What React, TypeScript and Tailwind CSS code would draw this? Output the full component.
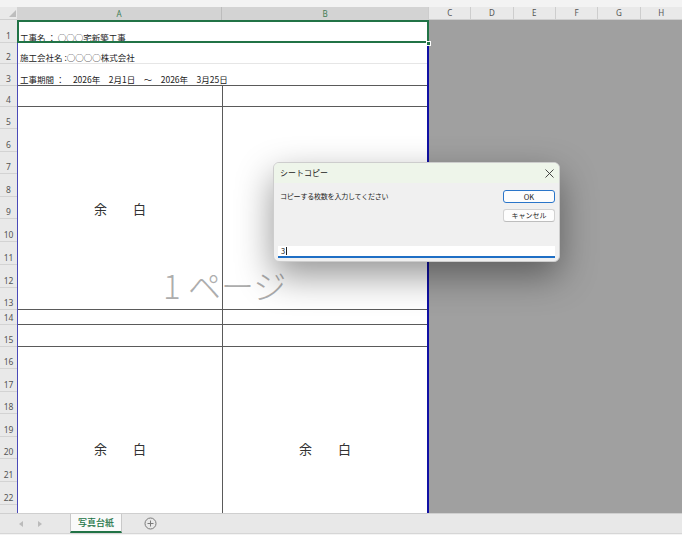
import React from 'react';

const jp = "font-['Noto_Sans_CJK_JP','Noto_Sans',sans-serif]";

const rowHeights = [23, 21, 22, 21, 22, 23, 22, 23, 22, 23, 23, 23, 22, 15, 22, 22, 23, 22, 23, 22, 23, 23];
const hClass: Record<number, string> = {
  15: 'h-[15px]',
  21: 'h-[21px]',
  22: 'h-[22px]',
  23: 'h-[23px]',
};

const otherCols = ['C', 'D', 'E', 'F', 'G', 'H'];

const Yohaku = () => (
  <span className={`${jp} text-[13px] leading-[13px] text-[#333]`}>余　　白</span>
);

const ColumnHeaders = () => (
  <div className="flex h-[13px] shrink-0 text-[8px] leading-none font-['Noto_Sans',sans-serif]">
    <div className="relative w-[17px] bg-[#e9e9e9] border-b border-[#cfcfcf]">
      <svg className="absolute right-[1px] bottom-[2px]" width="7" height="7" viewBox="0 0 7 7">
        <path d="M7 0 L7 7 L0 7 Z" fill="#bdbdbd" />
      </svg>
    </div>
    <div className="w-[205px] flex items-center justify-center bg-[#d3d3d3] text-[#3f7d53] border-r border-[#bcbcbc]">
      A
    </div>
    <div className="w-[206px] flex items-center justify-center bg-[#d3d3d3] text-[#3f7d53]">B</div>
    {otherCols.map((c) => (
      <div
        key={c}
        className="flex-1 flex items-center justify-center bg-[#e9e9e9] text-[#555] border-l border-[#cdcdcd] border-b border-b-[#cfcfcf]"
      >
        {c}
      </div>
    ))}
  </div>
);

const RowHeaders = () => (
  <div className="w-[17px] shrink-0 flex flex-col bg-[#e9e9e9] text-[8.5px] text-[#555] font-['Noto_Sans',sans-serif]">
    {rowHeights.map((h, i) => (
      <div
        key={i}
        className={`${hClass[h]} shrink-0 flex items-end justify-center leading-none pb-[2px] border-b border-[#d3d3d3]`}
      >
        {i + 1}
      </div>
    ))}
    <div className="flex-1" />
  </div>
);

const Sheet = () => (
  <div className={`${jp} relative w-[412px] shrink-0 flex flex-col bg-white border-l border-l-[#4a4ab8] border-r-2 border-r-[#1010a4]`}>
    {/* row 1 */}
    <div className="relative h-[23px] shrink-0 flex items-end pl-[2px] pb-[1px] text-[8.5px] leading-[10px] text-[#222]">
      工事名 ： ○○○宅新築工事
      <div className="absolute -left-px -right-[2px] top-0 bottom-0 border-2 border-[#217346]" />
      <div className="absolute -right-[4px] -bottom-[3px] w-[5px] h-[5px] bg-[#217346] border border-white" />
    </div>
    {/* row 2 */}
    <div className="h-[21px] shrink-0 flex items-end pl-[2px] pb-[1px] text-[8.5px] leading-[10px] text-[#222] border-b border-[#e6e6e6]">
      施工会社名 :○○○○株式会社
    </div>
    {/* row 3 */}
    <div className="h-[22px] shrink-0 flex items-end pl-[2px] pb-[1px] text-[8.5px] leading-[10px] text-[#222] border-b border-[#5a5a5a] whitespace-pre">
      工事期間 ：　2026年　2月1日　～　2026年　3月25日
    </div>
    {/* row 4 */}
    <div className="h-[21px] shrink-0 flex border-b border-[#5a5a5a]">
      <div className="w-[205px] border-r border-[#5a5a5a]" />
      <div className="flex-1" />
    </div>
    {/* rows 5-13 */}
    <div className="h-[203px] shrink-0 flex border-b border-[#5a5a5a]">
      <div className="w-[205px] flex items-center justify-center border-r border-[#5a5a5a]">
        <Yohaku />
      </div>
      <div className="flex-1" />
    </div>
    {/* row 14 */}
    <div className="h-[15px] shrink-0 flex border-b border-[#5a5a5a]">
      <div className="w-[205px] border-r border-[#5a5a5a]" />
      <div className="flex-1" />
    </div>
    {/* row 15 */}
    <div className="h-[22px] shrink-0 flex border-b border-[#5a5a5a]">
      <div className="w-[205px] border-r border-[#5a5a5a]" />
      <div className="flex-1" />
    </div>
    {/* rows 16- */}
    <div className="flex-1 flex">
      <div className="w-[205px] flex justify-center pt-[95px] border-r border-[#5a5a5a]">
        <Yohaku />
      </div>
      <div className="flex-1 flex justify-center pt-[95px]">
        <Yohaku />
      </div>
    </div>

    {/* page watermark */}
    <div className="absolute left-[145px] top-[243px] text-[33px] leading-[44px] font-light text-[#adadad] whitespace-pre pointer-events-none">
      1 ページ
    </div>
  </div>
);

const TabBar = () => (
  <div className="h-[22px] shrink-0 flex flex-col bg-[#e8e8e8] border-t border-[#cfcfcf]">
    <div className="flex-1 flex items-stretch">
      <div className="w-[70px] flex items-center gap-[15px] pl-[19px]">
        <svg width="4" height="6" viewBox="0 0 4 6">
          <path d="M4 0 L0 3 L4 6 Z" fill="#bbbbbb" />
        </svg>
        <svg width="4" height="6" viewBox="0 0 4 6">
          <path d="M0 0 L4 3 L0 6 Z" fill="#bbbbbb" />
        </svg>
      </div>
      <div className={`${jp} w-[52px] flex items-center justify-center bg-[#fafafa] border-x border-[#c9c9c9] border-b-2 border-b-[#217346] text-[9px] font-medium text-[#217346]`}>
        写真台紙
      </div>
      <div className="flex items-center pl-[22px]">
        <svg width="13" height="13" viewBox="0 0 13 13" fill="none" stroke="#7a7a7a" strokeWidth="1">
          <circle cx="6.5" cy="6.5" r="5.5" />
          <path d="M6.5 3.5 V9.5 M3.5 6.5 H9.5" />
        </svg>
      </div>
    </div>
    <div className="h-[2px] bg-[#f4f4f4] border-t border-[#d6d6d6]" />
  </div>
);

const CopyDialog = () => (
  <div className={`${jp} absolute left-[273px] top-[162px] w-[287px] h-[100px] flex flex-col rounded-[6px] bg-[#f0f0f0] border border-[#cdcdcd] shadow-[0_14px_36px_rgba(0,0,0,0.42)] overflow-hidden`}>
    <div className="h-[20px] shrink-0 flex items-center justify-between pl-[6px] pr-[5px] bg-[#eef5ea]">
      <span className="text-[8px] leading-none text-[#222]">シートコピー</span>
      <svg width="9" height="9" viewBox="0 0 9 9" stroke="#333" strokeWidth="0.9">
        <path d="M0.5 0.5 L8.5 8.5 M8.5 0.5 L0.5 8.5" />
      </svg>
    </div>
    <div className="flex-1 flex flex-col px-[4px] pt-[7px]">
      <div className="flex justify-between">
        <p className="pl-[2px] pt-[3px] text-[7px] leading-none tracking-[-0.2px] text-[#222]">
          コピーする枚数を入力してください
        </p>
        <div className="w-[52px] flex flex-col gap-[6px]">
          <div className="h-[13px] flex items-center justify-center rounded-[3px] bg-[#fdfdfd] border border-[#2a75c9] text-[7.5px] leading-none text-[#222]">
            OK
          </div>
          <div className="h-[13px] flex items-center justify-center rounded-[3px] bg-[#fdfdfd] border border-[#d2d2d2] border-b-[#bdbdbd] text-[7px] leading-none text-[#222]">
            キャンセル
          </div>
        </div>
      </div>
      <div className="mt-[24px] h-[12px] flex items-center pl-[3px] bg-white border-b-2 border-[#1f6fc5] text-[7.5px] leading-none text-[#222]">
        3<span className="ml-px w-px h-[8px] bg-[#222]" />
      </div>
    </div>
  </div>
);

export default function App() {
  return (
    <div className="relative w-[682px] h-[535px] flex flex-col overflow-hidden bg-[#f3f3f3]">
      <div className="h-[7px] shrink-0 bg-[#f3f3f3]" />
      <ColumnHeaders />
      <div className="flex-1 min-h-0 flex">
        <RowHeaders />
        <Sheet />
        <div className="flex-1 bg-[#a0a0a0]" />
      </div>
      <TabBar />
      <CopyDialog />
    </div>
  );
}
